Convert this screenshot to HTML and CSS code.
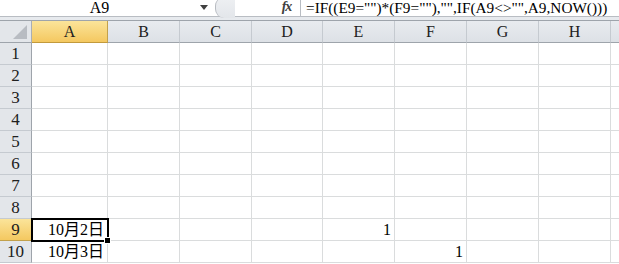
FILE: index.html
```html
<!DOCTYPE html>
<html lang="en">
<head>
    <meta charset="UTF-8">
    <title>Sheet</title>
    <link rel="stylesheet" href="styles.css">
</head>
<body>
    <div class="formula-bar">
        <div class="name-box">A9</div>
        <div class="name-arrow"><svg width="8" height="5" viewBox="0 0 8 5"><path d="M0 0H8L4 5Z" fill="#404040"/></svg></div>
        <div class="splitter"><span class="splitter-knob"></span></div>
        <div class="fx">fx</div>
        <div class="formula">=IF((E9="")*(F9=""),"",IF(A9&lt;&gt;"",A9,NOW()))</div>
    </div>
    <div class="band"></div>

    <div class="sheet">
        <div class="corner"><svg width="14" height="14" viewBox="0 0 14 14"><path d="M14 0V14H0Z" fill="#b8bcc2"/></svg></div>
        <div class="col-head active">A</div>
        <div class="col-head">B</div>
        <div class="col-head">C</div>
        <div class="col-head">D</div>
        <div class="col-head">E</div>
        <div class="col-head">F</div>
        <div class="col-head">G</div>
        <div class="col-head">H</div>
        <div class="col-head rest"></div>

        <div class="row-head">1</div><div class="cell"></div><div class="cell"></div><div class="cell"></div><div class="cell"></div><div class="cell"></div><div class="cell"></div><div class="cell"></div><div class="cell"></div><div class="cell rest"></div>
        <div class="row-head">2</div><div class="cell"></div><div class="cell"></div><div class="cell"></div><div class="cell"></div><div class="cell"></div><div class="cell"></div><div class="cell"></div><div class="cell"></div><div class="cell rest"></div>
        <div class="row-head">3</div><div class="cell"></div><div class="cell"></div><div class="cell"></div><div class="cell"></div><div class="cell"></div><div class="cell"></div><div class="cell"></div><div class="cell"></div><div class="cell rest"></div>
        <div class="row-head">4</div><div class="cell"></div><div class="cell"></div><div class="cell"></div><div class="cell"></div><div class="cell"></div><div class="cell"></div><div class="cell"></div><div class="cell"></div><div class="cell rest"></div>
        <div class="row-head">5</div><div class="cell"></div><div class="cell"></div><div class="cell"></div><div class="cell"></div><div class="cell"></div><div class="cell"></div><div class="cell"></div><div class="cell"></div><div class="cell rest"></div>
        <div class="row-head">6</div><div class="cell"></div><div class="cell"></div><div class="cell"></div><div class="cell"></div><div class="cell"></div><div class="cell"></div><div class="cell"></div><div class="cell"></div><div class="cell rest"></div>
        <div class="row-head">7</div><div class="cell"></div><div class="cell"></div><div class="cell"></div><div class="cell"></div><div class="cell"></div><div class="cell"></div><div class="cell"></div><div class="cell"></div><div class="cell rest"></div>
        <div class="row-head">8</div><div class="cell"></div><div class="cell"></div><div class="cell"></div><div class="cell"></div><div class="cell"></div><div class="cell"></div><div class="cell"></div><div class="cell"></div><div class="cell rest"></div>
        <div class="row-head active">9</div><div class="cell selected">10月2日</div><div class="cell"></div><div class="cell"></div><div class="cell"></div><div class="cell">1</div><div class="cell"></div><div class="cell"></div><div class="cell"></div><div class="cell rest"></div>
        <div class="row-head">10</div><div class="cell">10月3日</div><div class="cell"></div><div class="cell"></div><div class="cell"></div><div class="cell"></div><div class="cell">1</div><div class="cell"></div><div class="cell"></div><div class="cell rest"></div>
    </div>
</body>
</html>
```

FILE: styles.css
```css
body {
    margin: 0;
    background: #fff;
    font-family: "Liberation Serif", "Noto Sans CJK TC", serif;
    color: #000;
    overflow: hidden;
}
.formula-bar {
    display: flex;
    align-items: center;
    height: 16px;
    border-bottom: 1px solid #b9bdc3;
    font-size: 16px;
}
.name-box {
    width: 195px;
    text-align: center;
    line-height: 16px;
    padding-left: 2px;
}
.name-arrow {
    width: 14px;
    display: flex;
    align-items: center;
    justify-content: center;
    margin-top: -2px;
}
.splitter {
    width: 62px;
    height: 16px;
    position: relative;
    background: #fff;
}
.splitter-knob {
    position: absolute;
    left: 4px;
    top: -3px;
    width: 19px;
    height: 21px;
    border-radius: 9px 0 0 9px;
    border-left: 1px solid #b7bbc1;
    background: linear-gradient(#eef0f3, #e3e6ea);
}
.fx {
    width: 27px;
    font-style: italic;
    font-weight: bold;
    font-size: 14px;
    color: #404040;
    text-align: center;
    border-right: 1px solid #b9bdc3;
    height: 16px;
    line-height: 14px;
    letter-spacing: -1px;
}
.formula {
    padding-left: 5px;
    font-size: 15.3px;
    white-space: nowrap;
    line-height: 16px;
}
.band {
    height: 3px;
    background: #e7eaee;
    border-bottom: 1px solid #9ea4ab;
}
.sheet {
    display: grid;
    grid-template-columns: 32px 76px 72px 72px 71px 72px 72px 72px 72px 8px;
    grid-template-rows: 22px repeat(10, 22px);
}
.corner {
    background: #e3e6ea;
    border-right: 1px solid #a9aeb5;
    border-bottom: 1px solid #9ea4ab;
    box-sizing: border-box;
    display: flex;
    align-items: flex-end;
    justify-content: flex-end;
    padding: 0 4px 3px 0;
}
.col-head {
    background: linear-gradient(#e8ebef, #dde1e6);
    border-right: 1px solid #c5cad0;
    border-bottom: 1px solid #9ea4ab;
    box-sizing: border-box;
    text-align: center;
    font-size: 16px;
    line-height: 22px;
    color: #202020;
}
.col-head.active, .row-head.active {
    background: linear-gradient(#fbe49a, #f4c860);
    border-color: #c2a14c;
}
.col-head.active {
    border-bottom: 1px solid #c29a3c;
}
.row-head {
    background: #e3e6ea;
    border-right: 1px solid #9ea4ab;
    border-bottom: 1px solid #c5cad0;
    box-sizing: border-box;
    text-align: center;
    font-size: 17px;
    line-height: 22px;
    color: #202020;
}
.cell {
    border-right: 1px solid #dadcdd;
    border-bottom: 1px solid #dadcdd;
    box-sizing: border-box;
    text-align: right;
    padding-right: 3px;
    font-size: 16px;
    line-height: 22px;
    white-space: nowrap;
}
.rest {
    border-right: none;
}
.cell.selected {
    position: relative;
    outline: 2px solid #000;
    outline-offset: -1px;
}
.cell.selected::after {
    content: "";
    position: absolute;
    right: -4px;
    bottom: -4px;
    width: 5px;
    height: 5px;
    background: #000;
    border: 1px solid #fff;
}
```
